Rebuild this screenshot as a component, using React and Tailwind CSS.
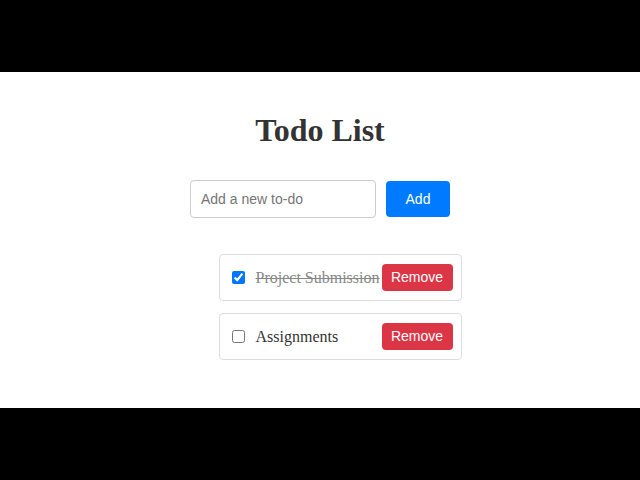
import React, { useState } from 'react';

const serif = { fontFamily: '"Liberation Serif", "Times New Roman", serif' };

export default function App() {
  const [text, setText] = useState('');
  const [todos, setTodos] = useState([
    { id: 1, title: 'Project Submission', done: true },
    { id: 2, title: 'Assignments', done: false },
  ]);

  const add = () => {
    if (!text.trim()) return;
    setTodos([...todos, { id: Date.now(), title: text.trim(), done: false }]);
    setText('');
  };

  const toggle = (id) =>
    setTodos(todos.map((t) => (t.id === id ? { ...t, done: !t.done } : t)));

  const remove = (id) => setTodos(todos.filter((t) => t.id !== id));

  return (
    <div className="w-[640px] h-[480px] bg-black flex flex-col justify-center">
      <div className="h-[336px] bg-white flex flex-col items-center pt-[40px]">
        <h1
          className="text-[32px] leading-[36px] font-bold text-[#333]"
          style={serif}
        >
          Todo List
        </h1>

        <div className="mt-[32px] flex items-center gap-[10px] font-['Liberation_Sans',Arial,sans-serif]">
          <input
            value={text}
            onChange={(e) => setText(e.target.value)}
            placeholder="Add a new to-do"
            className="w-[186px] h-[38px] px-[10px] border border-[#ccc] rounded-[4px] text-[14px] text-[#333] placeholder:text-[#757575] outline-none"
          />
          <button
            onClick={add}
            className="w-[64px] h-[36px] bg-[#007bff] text-white text-[14px] rounded-[4px]"
          >
            Add
          </button>
        </div>

        <ul className="mt-[36px] w-[283px] pl-[40px] flex flex-col gap-[12px]">
          {todos.map((t) => (
            <li
              key={t.id}
              className="h-[47px] border border-[#ddd] rounded-[4px] flex items-center pl-[12px] pr-[8px]"
            >
              <input
                type="checkbox"
                checked={t.done}
                onChange={() => toggle(t.id)}
                className="m-0 w-[13px] h-[13px] shrink-0"
              />
              <span
                className={`ml-[11px] flex-1 min-w-0 whitespace-nowrap text-[16px] ${
                  t.done ? 'line-through text-[#888]' : 'text-[#333]'
                }`}
                style={serif}
              >
                {t.title}
              </span>
              <button
                onClick={() => remove(t.id)}
                className="relative w-[71px] h-[27px] shrink-0 bg-[#dc3545] text-white text-[14px] rounded-[4px] font-['Liberation_Sans',Arial,sans-serif]"
              >
                Remove
              </button>
            </li>
          ))}
        </ul>
      </div>
    </div>
  );
}
